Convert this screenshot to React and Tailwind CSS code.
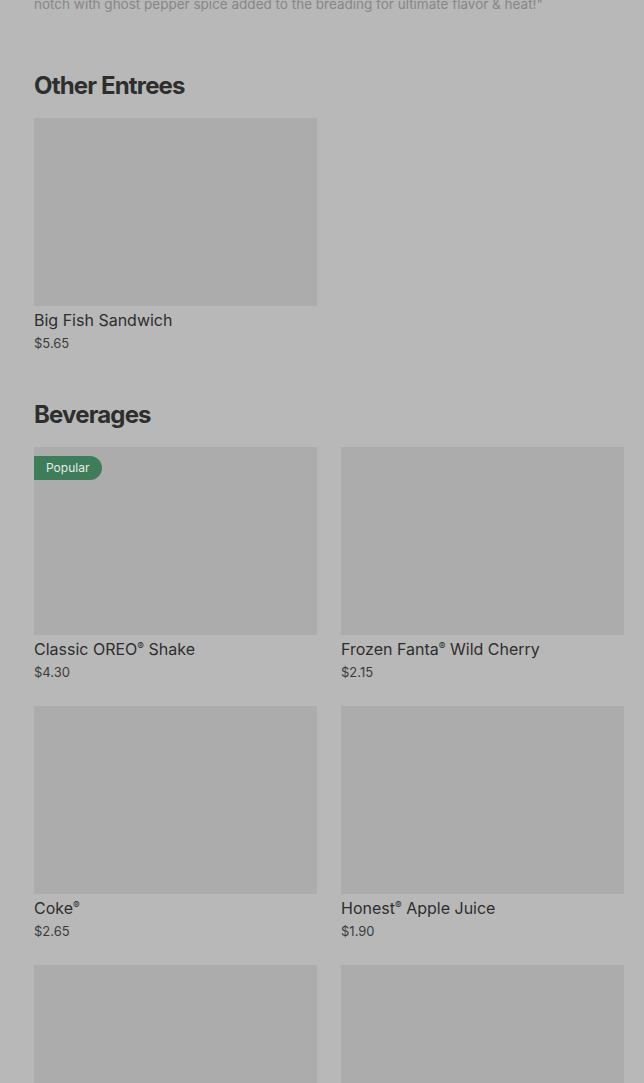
import React from "react"

const otherEntrees = [
  { name: "Big Fish Sandwich", price: "$5.65" },
]

const beverages = [
  { name: "Classic OREO® Shake", price: "$4.30", popular: true },
  { name: "Frozen Fanta® Wild Cherry", price: "$2.15" },
  { name: "Coke®", price: "$2.65" },
  { name: "Honest® Apple Juice", price: "$1.90" },
  { name: "", price: "" },
  { name: "", price: "" },
]

// render the ® mark small and raised like the menu does
function ItemName({ name }) {
  const parts = name.split("®")
  return (
    <>
      {parts.map((part, i) => (
        <React.Fragment key={i}>
          {part}
          {i < parts.length - 1 && <span className="relative -top-[5px] text-[10px] leading-none">®</span>}
        </React.Fragment>
      ))}
    </>
  )
}

function ItemCard({ item }) {
  return (
    <div className="flex flex-col pb-6">
      <div className="relative h-[188px] w-full bg-[#acacac]">
        {item.popular && (
          <span className="absolute left-0 top-[9px] flex h-6 items-center rounded-r-full bg-[#3e7c5a] pl-3 pr-[13px] text-[12px] text-[#e6ece8]">
            Popular
          </span>
        )}
      </div>
      {item.name && (
        <>
          <div className="mt-[2px] h-6 text-[16px] leading-6 font-normal text-[#2e2e2e]">
            <ItemName name={item.name} />
          </div>
          <div className="mt-[1px] text-[13px] leading-5 text-[#3c3c3c]">{item.price}</div>
        </>
      )}
    </div>
  )
}

function Section({ title, items, gridClass }) {
  return (
    <section>
      <h2 className="text-[24px] leading-8 font-bold tracking-[-0.035em] text-[#2e2e2e]">{title}</h2>
      <div className={gridClass}>
        {items.map((item, i) => (
          <ItemCard key={i} item={item} />
        ))}
      </div>
    </section>
  )
}

export default function App() {
  return (
    <div className="h-[1083px] overflow-hidden bg-[#b8b8b8] pl-[34px] pr-5 font-['Inter',sans-serif]">
      <p className="-mt-[6px] text-[13.5px] leading-5 text-[#878787]">
        notch with ghost pepper spice added to the breading for ultimate flavor &amp; heat!"
      </p>
      <div className="mt-[56px]">
        <Section title="Other Entrees" items={otherEntrees} gridClass="mt-4 grid grid-cols-2 gap-x-6" />
      </div>
      <div className="mt-[22px]">
        <Section title="Beverages" items={beverages} gridClass="mt-4 grid grid-cols-2 gap-x-6" />
      </div>
    </div>
  )
}
